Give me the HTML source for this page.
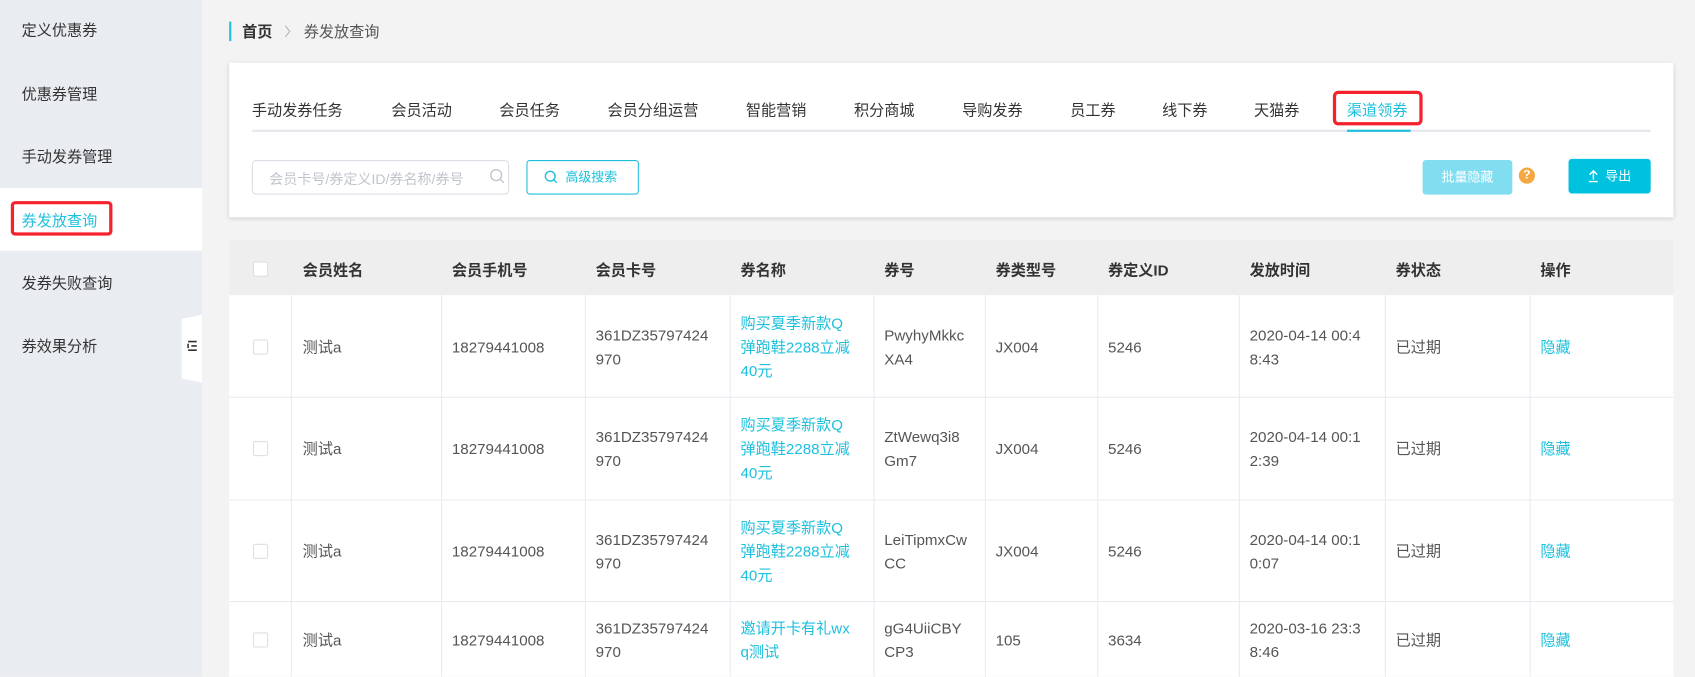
<!DOCTYPE html>
<html><head><meta charset="utf-8"><style>
*{margin:0;padding:0;box-sizing:border-box}
html,body{width:1695px;height:677px;overflow:hidden;background:#f3f3f3}
#w{width:1568px;height:626px;transform:scale(1.081);transform-origin:0 0;position:relative;font-family:"Liberation Sans","Noto Sans CJK SC",sans-serif;font-size:14px;color:#555}
.a{position:absolute}
.side{left:0;top:0;width:187px;height:626px;background:#e9ecf1}
.si{position:absolute;left:20px;font-size:14px;color:#333}
.card{left:212px;top:58px;width:1336px;height:143px;background:#fff;box-shadow:0 1px 4px rgba(0,0,0,.15)}
.tab{position:absolute;top:34px;font-size:14px;color:#333}
.tbl{left:212px;top:222px;width:1336px;height:404px;background:#fff}
.hd{position:absolute;left:0;top:0;width:1336px;height:51px;background:#eeeeee}
.th{position:absolute;top:18px;font-weight:bold;color:#333;font-size:14px}
.vl{position:absolute;width:1px;background:#e8ebf0;top:51px;height:353px}
.hl{position:absolute;left:0;width:1336px;height:1px;background:#e8ebf0}
.c{position:absolute;line-height:22px;font-size:14px;color:#555}
.lk{color:#1ec0dd}
.cb{position:absolute;left:22px;width:14px;height:14px;border:1px solid #dcdfe6;border-radius:2px;background:#fff}
</style></head><body><div id="w">
<div class="a side">
<div class="si" style="top:18px">定义优惠券</div>
<div class="si" style="top:77px">优惠券管理</div>
<div class="si" style="top:135px">手动发券管理</div>
<div class="a" style="left:0;top:174px;width:187px;height:58px;background:#fff"></div>
<div class="a" style="left:10px;top:186px;width:94px;height:32px;border:3px solid #f5222d;border-radius:4px"></div>
<div class="si" style="top:194px;color:#1ec0dd">券发放查询</div>
<div class="si" style="top:252px">发券失败查询</div>
<div class="si" style="top:310px">券效果分析</div>
<svg class="a" style="left:168px;top:291px" width="19" height="63"><polygon points="0,4 19,0 19,63 0,59" fill="#fff"/><g stroke="#333" stroke-width="1.5"><line x1="6" y1="25" x2="14" y2="25"/><line x1="9" y1="29" x2="14" y2="29"/><line x1="6" y1="33" x2="14" y2="33"/><line x1="6" y1="27" x2="6" y2="31"/></g></svg>
</div>
<div class="a" style="left:212px;top:20px;width:2px;height:18px;background:#1ec0dd"></div>
<div class="a" style="left:224px;top:19px;font-weight:bold;color:#333;font-size:14px">首页</div>
<svg class="a" style="left:262px;top:23px" width="8" height="12"><path d="M2 1L6 6 2 11" fill="none" stroke="#bbb" stroke-width="1.2"/></svg>
<div class="a" style="left:281px;top:19px;color:#555;font-size:14px">券发放查询</div>
<div class="a card">
<div class="tab" style="left:21px">手动发券任务</div>
<div class="tab" style="left:150px">会员活动</div>
<div class="tab" style="left:250px">会员任务</div>
<div class="tab" style="left:350px">会员分组运营</div>
<div class="tab" style="left:478px">智能营销</div>
<div class="tab" style="left:578px">积分商城</div>
<div class="tab" style="left:678px">导购发券</div>
<div class="tab" style="left:778px">员工券</div>
<div class="tab" style="left:863px">线下券</div>
<div class="tab" style="left:948px">天猫券</div>
<div class="tab" style="left:1034px;color:#1ec0dd">渠道领券</div>
<div class="a" style="left:21px;top:62px;width:1294px;height:2px;background:#e4e7ed"></div>
<div class="a" style="left:1034px;top:62px;width:59px;height:2px;background:#1ec0dd"></div>
<div class="a" style="left:1021px;top:26px;width:83px;height:32px;border:3px solid #f5222d;border-radius:5px"></div>
<div class="a" style="left:21px;top:90px;width:238px;height:32px;border:1px solid #dcdfe6;border-radius:4px;background:#fff"></div>
<div class="a" style="left:37px;top:97px;color:#c0c4cc;font-size:13px">会员卡号/券定义ID/券名称/券号</div>
<svg class="a" style="left:241px;top:98px" width="14" height="14"><circle cx="6" cy="6" r="5" fill="none" stroke="#c0c4cc" stroke-width="1.3"/><line x1="10" y1="10" x2="13" y2="13" stroke="#c0c4cc" stroke-width="1.3"/></svg>
<div class="a" style="left:275px;top:90px;width:104px;height:32px;border:1px solid #1ec0dd;border-radius:3px"></div>
<svg class="a" style="left:291px;top:99px" width="13" height="13"><circle cx="6" cy="6" r="4.5" fill="none" stroke="#1ec0dd" stroke-width="1.3"/><line x1="9" y1="9" x2="12" y2="12" stroke="#1ec0dd" stroke-width="1.3"/></svg>
<div class="a" style="left:311px;top:97px;color:#1ec0dd;font-size:12px">高级搜索</div>
<div class="a" style="left:1104px;top:90px;width:83px;height:32px;background:#80def0;border-radius:3px;color:#fff;font-size:12px;text-align:center;line-height:32px">批量隐藏</div>
<div class="a" style="left:1193px;top:97px;width:15px;height:15px;border-radius:50%;background:#f5a742;color:#fff;font-size:11px;font-weight:bold;text-align:center;line-height:15px">?</div>
<div class="a" style="left:1239px;top:89px;width:76px;height:32px;background:#00c1de;border-radius:3px;color:#fff;font-size:12px;line-height:32px;padding-left:34px">导出</div>
<svg class="a" style="left:1257px;top:99px" width="10" height="12"><path d="M5 1V9M1.5 4.5L5 1 8.5 4.5M1 11H9" fill="none" stroke="#fff" stroke-width="1.3"/></svg>
</div>
<div class="a tbl">
<div class="hd"></div>
<div class="cb" style="top:20px"></div>
<div class="th" style="left:68px">会员姓名</div>
<div class="th" style="left:206px">会员手机号</div>
<div class="th" style="left:339px">会员卡号</div>
<div class="th" style="left:473px">券名称</div>
<div class="th" style="left:606px">券号</div>
<div class="th" style="left:709px">券类型号</div>
<div class="th" style="left:813px">券定义ID</div>
<div class="th" style="left:944px">发放时间</div>
<div class="th" style="left:1079px">券状态</div>
<div class="th" style="left:1213px">操作</div>
<div class="vl" style="left:57px"></div><div class="vl" style="left:196px"></div><div class="vl" style="left:329px"></div><div class="vl" style="left:463px"></div><div class="vl" style="left:596px"></div><div class="vl" style="left:699px"></div><div class="vl" style="left:803px"></div><div class="vl" style="left:934px"></div><div class="vl" style="left:1069px"></div><div class="vl" style="left:1203px"></div>
<div class="hl" style="top:145px"></div><div class="hl" style="top:240px"></div><div class="hl" style="top:334px"></div>

<div class="cb" style="top:92px"></div>
<div class="c" style="left:68px;top:88px">测试a</div>
<div class="c" style="left:206px;top:88px">18279441008</div>
<div class="c" style="left:339px;top:77px">361DZ35797424<br>970</div>
<div class="c lk" style="left:473px;top:66px">购买夏季新款Q<br>弹跑鞋2288立减<br>40元</div>
<div class="c" style="left:606px;top:77px">PwyhyMkkc<br>XA4</div>
<div class="c" style="left:709px;top:88px">JX004</div>
<div class="c" style="left:813px;top:88px">5246</div>
<div class="c" style="left:944px;top:77px">2020-04-14 00:4<br>8:43</div>
<div class="c" style="left:1079px;top:88px">已过期</div>
<div class="c lk" style="left:1213px;top:88px">隐藏</div>

<div class="cb" style="top:186px"></div>
<div class="c" style="left:68px;top:182px">测试a</div>
<div class="c" style="left:206px;top:182px">18279441008</div>
<div class="c" style="left:339px;top:171px">361DZ35797424<br>970</div>
<div class="c lk" style="left:473px;top:160px">购买夏季新款Q<br>弹跑鞋2288立减<br>40元</div>
<div class="c" style="left:606px;top:171px">ZtWewq3i8<br>Gm7</div>
<div class="c" style="left:709px;top:182px">JX004</div>
<div class="c" style="left:813px;top:182px">5246</div>
<div class="c" style="left:944px;top:171px">2020-04-14 00:1<br>2:39</div>
<div class="c" style="left:1079px;top:182px">已过期</div>
<div class="c lk" style="left:1213px;top:182px">隐藏</div>

<div class="cb" style="top:281px"></div>
<div class="c" style="left:68px;top:277px">测试a</div>
<div class="c" style="left:206px;top:277px">18279441008</div>
<div class="c" style="left:339px;top:266px">361DZ35797424<br>970</div>
<div class="c lk" style="left:473px;top:255px">购买夏季新款Q<br>弹跑鞋2288立减<br>40元</div>
<div class="c" style="left:606px;top:266px">LeiTipmxCw<br>CC</div>
<div class="c" style="left:709px;top:277px">JX004</div>
<div class="c" style="left:813px;top:277px">5246</div>
<div class="c" style="left:944px;top:266px">2020-04-14 00:1<br>0:07</div>
<div class="c" style="left:1079px;top:277px">已过期</div>
<div class="c lk" style="left:1213px;top:277px">隐藏</div>

<div class="cb" style="top:363px"></div>
<div class="c" style="left:68px;top:359px">测试a</div>
<div class="c" style="left:206px;top:359px">18279441008</div>
<div class="c" style="left:339px;top:348px">361DZ35797424<br>970</div>
<div class="c lk" style="left:473px;top:348px">邀请开卡有礼wx<br>q测试</div>
<div class="c" style="left:606px;top:348px">gG4UiiCBY<br>CP3</div>
<div class="c" style="left:709px;top:359px">105</div>
<div class="c" style="left:813px;top:359px">3634</div>
<div class="c" style="left:944px;top:348px">2020-03-16 23:3<br>8:46</div>
<div class="c" style="left:1079px;top:359px">已过期</div>
<div class="c lk" style="left:1213px;top:359px">隐藏</div>
</div>
</div></body></html>
